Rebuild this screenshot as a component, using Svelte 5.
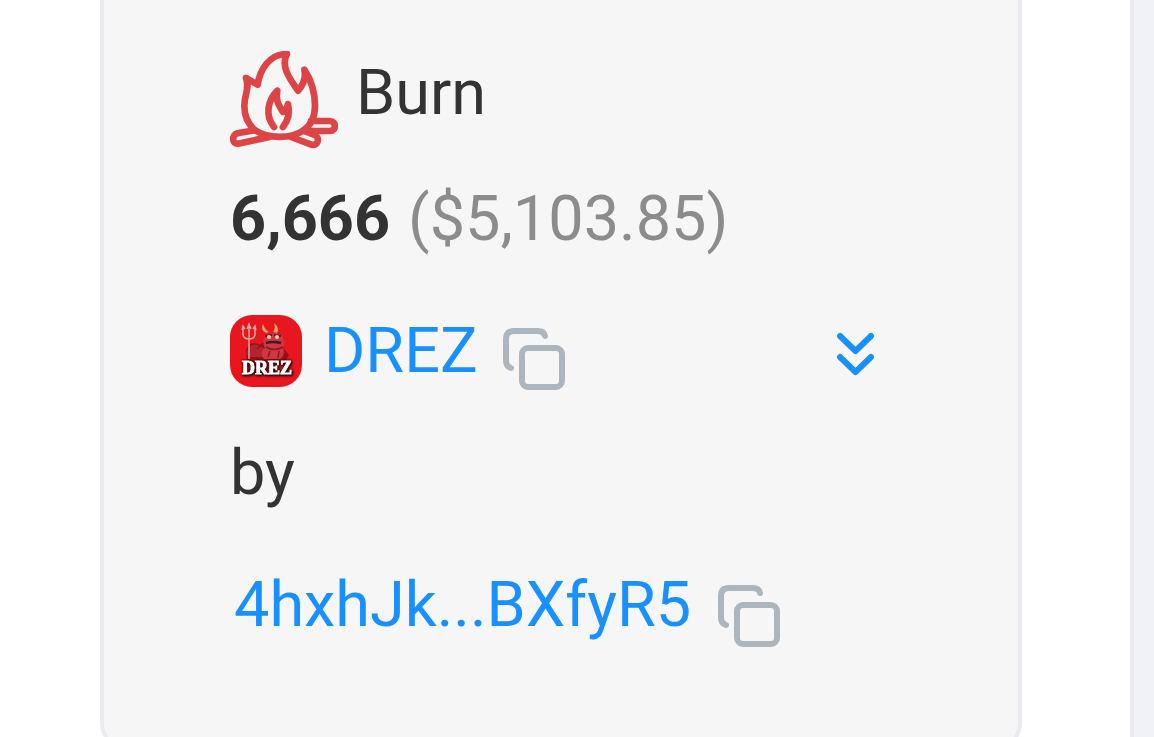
<script lang="ts">
  interface Token {
    symbol: string;
    amount: string;
    value: string;
  }

  const action = 'Burn';
  const token: Token = {
    symbol: 'DREZ',
    amount: '6,666',
    value: '$5,103.85'
  };
  const account = '4hxhJk...BXfyR5';

  function copy(text: string) {
    navigator.clipboard?.writeText(text);
  }
</script>

{#snippet copyIcon()}
  <svg class="copy-icon" viewBox="0 0 64 64" aria-hidden="true">
    <path d="M9 41C6 40 4 38 4 34V12Q4 4 12 4H36Q42 4 43 9" />
    <rect x="20" y="21" width="40" height="39" rx="6" />
  </svg>
{/snippet}

<div class="page">
  <main class="panel">
    <section class="card">
      <div class="row action">
        <svg class="fire" viewBox="30 33 324 294" aria-hidden="true">
          <path d="M104 270C82 250 73 224 73 198C73 162 90 148 78 114L113 134C120 88 148 42 201 42C180 80 212 120 234 152C252 132 258 110 253 89C274 121 285 158 285 198C285 236 270 258 249 272C211 297 145 297 104 270Z" />
          <path d="M162 261C134 225 143 182 172 152C165 180 177 197 189 216Q203 207 204 192C211 220 203 243 189 261" />
          <path d="M104 271L52 280C34 285 36 313 54 311L148 291" />
          <path d="M273 243H329C350 243 350 273 329 273H264" />
          <path d="M213 291L274 314C296 319 300 291 284 285L250 272" />
        </svg>
        <span>{action}</span>
      </div>

      <div class="row amount">
        <strong>{token.amount}</strong>
        <span class="value">({token.value})</span>
      </div>

      <div class="row token">
        <svg class="logo" viewBox="0 0 72 72" aria-hidden="true">
          <rect width="72" height="72" rx="22" fill="#e8161f" />
          <path d="M16 35Q20 24 30 30L35 27Q35 18 45 17Q54 18 54 27L53 33L59 40L55 47H17Z" fill="#9c0f18" />
          <path d="M18 34Q22 27 29 31L36 34L34 42H19Q15 39 18 34Z" fill="#b3242e" />
          <path d="M36 20Q44 15 52 20Q56 26 53 33Q56 40 50 44H34Q29 37 35 33Q31 26 36 20Z" fill="#cf3741" />
          <path d="M36 32Q44 37 53 32M33 28L27 34M38 42L40 36M49 36L48 43" fill="none" stroke="#8b1722" stroke-width="1.5" />
          <path d="M36 18Q30 15 33 9Q35 15 39 17ZM43 17Q46 14 44 8Q50 13 47 18Z" fill="#dca55f" />
          <path d="M35 21L42 20M44 20L51 21" fill="none" stroke="#65101a" stroke-width="2" />
          <circle cx="39" cy="22" r="2" fill="#f5d0b1" />
          <circle cx="47" cy="22" r="2" fill="#f5d0b1" />
          <path d="M36 28Q43 26 51 28" fill="none" stroke="#4a1424" stroke-width="2.5" />
          <path d="M13 13V20Q14 24 19 24Q24 24 25 20V13M19 10V44M12 15L13 11L15 14M17 14L19 9L21 14M23 14L25 11L26 15" fill="none" stroke="#d3aaa3" stroke-width="1.5" />
          <text x="37" y="59" text-anchor="middle">DREZ</text>
        </svg>
        <a href="#token">{token.symbol}</a>
        <button type="button" aria-label="Copy token" onclick={() => copy(token.symbol)}>
          {@render copyIcon()}
        </button>
        <button type="button" class="expand" aria-label="Show details">
          <svg class="chevrons" viewBox="0 0 40 46" aria-hidden="true">
            <path d="M4 6L19.5 21L35 6M4 27L19.5 42L35 27" />
          </svg>
        </button>
      </div>

      <div class="row by">by</div>

      <div class="row account">
        <a href="#account">{account}</a>
        <button type="button" aria-label="Copy account" onclick={() => copy(account)}>
          {@render copyIcon()}
        </button>
      </div>
    </section>
  </main>
</div>

<style>
  :global(body) {
    margin: 0;
    background: #f0f2f5;
  }

  .page {
    height: 100vh;
    overflow: hidden;
    padding-right: 20px;
    font-family: Roboto, sans-serif;
    font-size: 63px;
    line-height: 72px;
    color: #333;
  }

  .panel {
    box-sizing: border-box;
    min-height: 100%;
    padding: 0 108px 0 100px;
    background: #fff;
    border-right: 4px solid #e9ebee;
  }

  .card {
    padding: 51px 142px 96px 126px;
    background: #f6f6f6;
    border: 4px solid #e9ebef;
    border-top: 0;
    border-radius: 0 0 24px 24px;
  }

  .row {
    display: flex;
    align-items: flex-start;
    white-space: nowrap;
  }

  .action {
    gap: 18px;
    margin-bottom: 34px;
    line-height: 84px;
  }

  .fire {
    width: 108px;
    height: 98px;
    fill: none;
    stroke: #dc4446;
    stroke-width: 20;
    stroke-linecap: round;
    stroke-linejoin: round;
  }

  .amount {
    gap: 18px;
    margin-bottom: 60px;
  }

  .value {
    color: #8c8c8c;
  }

  .token {
    min-height: 76px;
    margin-bottom: 46px;
  }

  .token a {
    margin: 0 24px 0 22px;
  }

  .account {
    min-height: 79px;
  }

  .account a {
    margin: 0 26px 0 4px;
  }

  .by {
    margin-bottom: 60px;
  }

  .logo {
    width: 72px;
    height: 72px;
  }

  .logo text {
    font: bold 18px "Liberation Serif", serif;
    fill: #fff;
    stroke: #fff;
    stroke-width: 1;
    filter: drop-shadow(0 0 1px #200) drop-shadow(1px 1px 1px #200);
  }

  a {
    color: #1890ff;
    text-decoration: none;
  }

  button {
    display: flex;
    align-self: flex-end;
    padding: 0;
    border: 0;
    background: none;
    cursor: pointer;
  }

  .copy-icon {
    width: 64px;
    height: 64px;
    fill: none;
    stroke: #adb5bd;
    stroke-width: 6;
    stroke-linecap: round;
  }

  .expand {
    align-self: center;
    margin-left: auto;
  }

  .chevrons {
    width: 40px;
    height: 46px;
    fill: none;
    stroke: #1890ff;
    stroke-width: 6;
    stroke-linecap: round;
    stroke-linejoin: round;
  }
</style>
